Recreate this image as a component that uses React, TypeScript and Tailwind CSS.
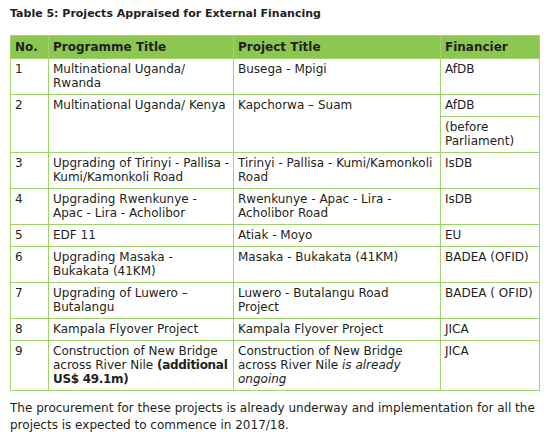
const ROWS: Array<{ no: string; prog: React.ReactNode; proj: React.ReactNode; fin: string }> = [
  { no: '1', prog: 'Multinational Uganda/ Rwanda', proj: 'Busega - Mpigi', fin: 'AfDB' },
  { no: '3', prog: 'Upgrading of Tirinyi - Pallisa - Kumi/Kamonkoli Road', proj: 'Tirinyi - Pallisa - Kumi/Kamonkoli Road', fin: 'IsDB' },
  {
    no: '4',
    prog: (
      <>
        Upgrading Rwenkunye -
        <br />
        Apac - Lira - Acholibor
      </>
    ),
    proj: 'Rwenkunye - Apac - Lira - Acholibor Road',
    fin: 'IsDB',
  },
  { no: '5', prog: 'EDF 11', proj: 'Atiak - Moyo', fin: 'EU' },
  { no: '6', prog: 'Upgrading Masaka - Bukakata (41KM)', proj: 'Masaka - Bukakata (41KM)', fin: 'BADEA (OFID)' },
  {
    no: '7',
    prog: 'Upgrading of Luwero – Butalangu',
    proj: (
      <>
        Luwero - Butalangu Road
        <br />
        Project
      </>
    ),
    fin: 'BADEA ( OFID)',
  },
  { no: '8', prog: 'Kampala Flyover Project', proj: 'Kampala Flyover Project', fin: 'JICA' },
  {
    no: '9',
    prog: (
      <>
        Construction of New Bridge
        <br />
        <span className="whitespace-nowrap">
          across River Nile <b className="tracking-[-0.3px]">(additional</b>
        </span>
        <br />
        <b className="tracking-[-0.3px]">US$ 49.1m)</b>
      </>
    ),
    proj: (
      <>
        Construction of New Bridge across River Nile <i>is already ongoing</i>
      </>
    ),
    fin: 'JICA',
  },
];

const td = 'border-[1.5px] border-[#9fd46b] align-top pl-[4px] pr-[1px] pt-[3px] pb-[4px]';
const th = 'border-[1.5px] border-[#9fd46b] text-left font-bold px-[4px] py-[4px]';

function Row({ r }: { r: (typeof ROWS)[number] }) {
  return (
    <tr>
      <td className={td}>{r.no}</td>
      <td className={td}>{r.prog}</td>
      <td className={td}>{r.proj}</td>
      <td className={td}>{r.fin}</td>
    </tr>
  );
}

export default function App() {
  return (
    <div
      className="w-[551px] h-[442px] bg-white text-[#231f20] pl-[10px] pt-[5px] text-[12px] leading-[14px]"
      style={{ fontFamily: '"DejaVu Sans", "Open Sans", sans-serif' }}
    >
      <h1 className="font-bold text-[11px] leading-[17px]">Table 5: Projects Appraised for External Financing</h1>

      <table className="mt-[13px] w-[529px] border-collapse table-fixed">
        <colgroup>
          <col className="w-[38px]" />
          <col className="w-[185px]" />
          <col className="w-[207px]" />
          <col className="w-[99px]" />
        </colgroup>
        <thead>
          <tr className="bg-[#8cc751]">
            <th className={th}>No.</th>
            <th className={th}>Programme Title</th>
            <th className={th}>Project Title</th>
            <th className={th}>Financier</th>
          </tr>
        </thead>
        <tbody>
          <Row r={ROWS[0]} />
          <tr>
            <td rowSpan={2} className={td}>2</td>
            <td rowSpan={2} className={td}>Multinational Uganda/ Kenya</td>
            <td rowSpan={2} className={td}>Kapchorwa – Suam</td>
            <td className={td}>AfDB</td>
          </tr>
          <tr>
            <td className={td}>(before Parliament)</td>
          </tr>
          {ROWS.slice(1).map((r) => (
            <Row key={r.no} r={r} />
          ))}
        </tbody>
      </table>

      <p className="mt-[9px] pr-[8px] text-[12px] leading-[17px]">
        The procurement for these projects is already underway and implementation for all the projects is expected
        to commence in 2017/18.
      </p>
    </div>
  );
}
